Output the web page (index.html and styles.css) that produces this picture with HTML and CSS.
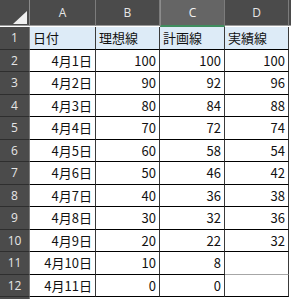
FILE: index.html
```html
<!DOCTYPE html>
<html lang="ja">
<head>
<meta charset="utf-8">
<link rel="stylesheet" href="styles.css">
</head>
<body>
<div class="sheet">
  <div class="corner"><span class="tri"></span></div>
  <div class="colh">A</div>
  <div class="colh">B</div>
  <div class="colh sel">C</div>
  <div class="colh">D</div>
  <div class="colh extra"></div>

  <div class="rowh">1</div>
  <div class="cell hl txt">日付</div>
  <div class="cell hl txt">理想線</div>
  <div class="cell hl txt">計画線</div>
  <div class="cell hl txt">実績線</div>
  <div class="blank"></div>

  <div class="rowh">2</div>
  <div class="cell num">4月1日</div><div class="cell num">100</div><div class="cell num">100</div><div class="cell num">100</div><div class="blank"></div>
  <div class="rowh">3</div>
  <div class="cell num">4月2日</div><div class="cell num">90</div><div class="cell num">92</div><div class="cell num">96</div><div class="blank"></div>
  <div class="rowh">4</div>
  <div class="cell num">4月3日</div><div class="cell num">80</div><div class="cell num">84</div><div class="cell num">88</div><div class="blank"></div>
  <div class="rowh">5</div>
  <div class="cell num">4月4日</div><div class="cell num">70</div><div class="cell num">72</div><div class="cell num">74</div><div class="blank"></div>
  <div class="rowh">6</div>
  <div class="cell num">4月5日</div><div class="cell num">60</div><div class="cell num">58</div><div class="cell num">54</div><div class="blank"></div>
  <div class="rowh">7</div>
  <div class="cell num">4月6日</div><div class="cell num">50</div><div class="cell num">46</div><div class="cell num">42</div><div class="blank"></div>
  <div class="rowh">8</div>
  <div class="cell num">4月7日</div><div class="cell num">40</div><div class="cell num">36</div><div class="cell num">38</div><div class="blank"></div>
  <div class="rowh">9</div>
  <div class="cell num">4月8日</div><div class="cell num">30</div><div class="cell num">32</div><div class="cell num">36</div><div class="blank"></div>
  <div class="rowh">10</div>
  <div class="cell num">4月9日</div><div class="cell num">20</div><div class="cell num">22</div><div class="cell num">32</div><div class="blank"></div>
  <div class="rowh">11</div>
  <div class="cell num">4月10日</div><div class="cell num">10</div><div class="cell num">8</div><div class="cell num grid-bottom"></div><div class="blank"></div>
  <div class="rowh">12</div>
  <div class="cell num">4月11日</div><div class="cell num">0</div><div class="cell num">0</div><div class="cell num"></div><div class="blank"></div>
  <div class="rowh last"></div>
  <div class="blank"></div><div class="blank"></div><div class="blank"></div><div class="blank"></div><div class="blank"></div>
</div>
</body>
</html>
```

FILE: styles.css
```css
html, body {
  margin: 0;
  padding: 0;
  background: #ffffff;
}
body {
  width: 291px;
  height: 299px;
  overflow: hidden;
}
.sheet {
  display: grid;
  grid-template-columns: 30px 66px 64px 65px 64px 1fr;
  grid-template-rows: 27px repeat(12, 22.5px) 1fr;
  width: 291px;
  height: 299px;
}
.corner {
  background: #4b4b4b;
  border-right: 1px solid #8a8a8a;
  border-bottom: 1px solid #9a9a9a;
  margin-bottom: 1px;
  position: relative;
}
.tri {
  position: absolute;
  right: 2px;
  bottom: 1px;
  width: 0;
  height: 0;
  border-left: 14px solid transparent;
  border-bottom: 13px solid #f0f0f0;
}
.colh {
  background: #4b4b4b;
  color: #e6e6e6;
  font-family: "Open Sans", "Noto Sans", sans-serif;
  font-size: 12px;
  display: flex;
  align-items: center;
  justify-content: center;
  border-right: 1px solid #7c7c7c;
  border-bottom: 1px solid #9a9a9a;
  margin-bottom: 1px;
}
.colh.sel {
  background: #656565;
  color: #f2f2f2;
  border-bottom: 2px solid #3f8d5e;
  margin-bottom: 0;
  border-left: 1px solid #8c8c8c;
}
.colh.extra {
  border-right: none;
}
.rowh {
  background: #4b4b4b;
  color: #e6e6e6;
  font-family: "Open Sans", "Noto Sans", sans-serif;
  font-size: 12px;
  display: flex;
  align-items: center;
  justify-content: center;
  border-right: 1px solid #7c7c7c;
  border-bottom: 1px solid #2e2e2e;
}
.rowh.last {
  border-bottom: none;
}
.cell {
  font-family: "Noto Sans CJK JP", "Liberation Sans", sans-serif;
  font-size: 13px;
  color: #111;
  display: flex;
  align-items: center;
  border-right: 1px solid #3a3a3a;
  border-bottom: 1px solid #000;
  overflow: hidden;
  white-space: nowrap;
}
.cell.hl {
  background: #ddebf7;
}
.cell.txt {
  justify-content: flex-start;
  padding-left: 3px;
}
.cell.num {
  justify-content: flex-end;
  padding-right: 3px;
}
.cell.grid-bottom {
  border-bottom-color: #a6a6a6;
}
.blank {
  background: #ffffff;
}
```
